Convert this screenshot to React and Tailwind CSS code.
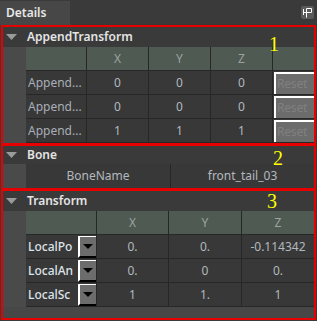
import React from 'react';

const Tri = ({ className }) => (
  <svg width="11" height="7" viewBox="0 0 11 7" className={className}>
    <polygon points="0,0 11,0 5.5,6" fill="currentColor" />
  </svg>
);

const SectionHeader = ({ title, h }) => (
  <div className={`flex items-center ${h}`}>
    <Tri className="ml-[3px] mr-[10px] text-[#9a9a9a]" />
    <span className="text-[12px] font-semibold text-[#e4e4e4] leading-none">{title}</span>
  </div>
);

const ResetCell = () => (
  <div className="bg-[#383838] pl-[1px] pt-[1px] min-w-0">
    <div className="h-[22px] border-t-2 border-l-2 border-white bg-[#6c6c6c] flex items-center pl-[1px] overflow-hidden whitespace-nowrap text-[12px] tracking-[-0.2px] text-[#808080]">
      Reset
    </div>
  </div>
);

const DropCell = ({ label }) => (
  <div className="bg-[#383838] flex items-stretch min-w-0">
    <div className="flex-1 flex items-center pl-[2px] text-[12px] font-medium text-[#dde3ea] overflow-hidden whitespace-nowrap">
      {label}
    </div>
    <div className="w-[18px] mt-px border-l-2 border-t border-white border-b-2 border-b-black bg-[#6c6c6c] flex items-center justify-center">
      <svg width="10" height="6" viewBox="0 0 10 6">
        <polygon points="0,0 10,0 5,5" fill="#000" />
      </svg>
    </div>
  </div>
);

const Cell = ({ children, className = '' }) => (
  <div className={`bg-[#383838] flex items-center justify-center min-w-0 text-[12px] text-[#b2b8bf] ${className}`}>
    {children}
  </div>
);

const Head = ({ children }) => (
  <div className="bg-[#4e5a52] flex items-center justify-center text-[12px] text-[#9ea3a0]">{children}</div>
);

export default function App() {
  const append = [
    ['0', '0', '0'],
    ['0', '0', '0'],
    ['1', '1', '1'],
  ];
  const transform = [
    ['LocalPo', '0.', '0.', '-0.114342'],
    ['LocalAn', '0.', '0', '0.'],
    ['LocalSc', '1', '1.', '1'],
  ];

  return (
    <div className="w-[317px] h-[321px] bg-[#3a3a3a] relative overflow-hidden font-['Noto_Sans',sans-serif]">
      {/* Tab bar */}
      <div className="h-[25px] flex items-end justify-between">
        <div className="w-[70px] h-[24px] bg-[#474747] flex items-center pl-[6px] text-[12px] font-semibold text-[#e8e8e8]">
          Details
        </div>
        <div className="w-[13px] h-[13px] bg-[#5a5a5a] rounded-[2px] mr-[3px] mb-[6px] flex items-center justify-center">
          <svg width="13" height="13" viewBox="0 0 13 13" fill="none" stroke="#fff" strokeWidth="1">
            <path d="M2.5 3v6M2.5 6.5h3M5.5 2.5h5v4h-5zM5.5 6.5v5" />
          </svg>
        </div>
      </div>

      {/* AppendTransform */}
      <div className="ml-px w-[315px] h-[120px] border-2 border-[#e60000] flex flex-col">
        <SectionHeader title="AppendTransform" h="h-[20px]" />
        <div className="flex flex-1">
          <div className="w-[23px] bg-[#4a4a4a]" />
          <div className="w-[288px] grid grid-cols-[60px_61px_61px_61px_41px] grid-rows-[23px_23px_23px_23px] gap-px bg-[#272727]">
            <Head></Head>
            <Head>X</Head>
            <Head>Y</Head>
            <Head>Z</Head>
            <Head></Head>
            {append.map((r, i) => (
              <React.Fragment key={i}>
                <div className="bg-[#383838] flex items-center pl-[2px] text-[12px] text-[#a9afb6] whitespace-nowrap overflow-hidden">Append...</div>
                {r.map((v, j) => (
                  <Cell key={j}>{v}</Cell>
                ))}
                <ResetCell />
              </React.Fragment>
            ))}
          </div>
        </div>
      </div>

      {/* Bone */}
      <div className="ml-px -mt-px w-[315px] h-[46px] border-2 border-[#e60000] flex flex-col">
        <SectionHeader title="Bone" h="h-[18px]" />
        <div className="flex flex-1">
          <div className="w-[23px] bg-[#4a4a4a]" />
          <div className="w-[288px] grid grid-cols-[144px_1fr] gap-px bg-[#272727]">
            <Cell className="text-[#8e9296]">BoneName</Cell>
            <Cell className="text-[#a3a8ad]">front_tail_03</Cell>
          </div>
        </div>
      </div>

      {/* Transform */}
      <div className="ml-px -mt-px w-[315px] h-[131px] border-2 border-[#e60000] flex flex-col">
        <SectionHeader title="Transform" h="h-[20px]" />
        <div className="flex">
          <div className="w-[23px] bg-[#4a4a4a]" />
          <div className="w-[288px] grid grid-cols-[70px_71px_72px_1fr] grid-rows-[23px_23px_23px_23px] gap-px bg-[#272727] pb-px">
            <Head></Head>
            <Head>X</Head>
            <Head>Y</Head>
            <Head>Z</Head>
            {transform.map((r, i) => (
              <React.Fragment key={i}>
                <DropCell label={r[0]} />
                <Cell>{r[1]}</Cell>
                <Cell>{r[2]}</Cell>
                <Cell>{r[3]}</Cell>
              </React.Fragment>
            ))}
          </div>
        </div>
        <div className="flex-1 bg-[#474747]" />
      </div>

      {/* annotation numbers */}
      <span className="absolute left-[269px] top-[34px] text-[20px] leading-none text-[#ffff00] font-['Liberation_Serif',serif]">1</span>
      <span className="absolute left-[273px] top-[148px] text-[20px] leading-none text-[#ffff00] font-['Liberation_Serif',serif]">2</span>
      <span className="absolute left-[267px] top-[191px] text-[20px] leading-none text-[#ffff00] font-['Liberation_Serif',serif]">3</span>
    </div>
  );
}
